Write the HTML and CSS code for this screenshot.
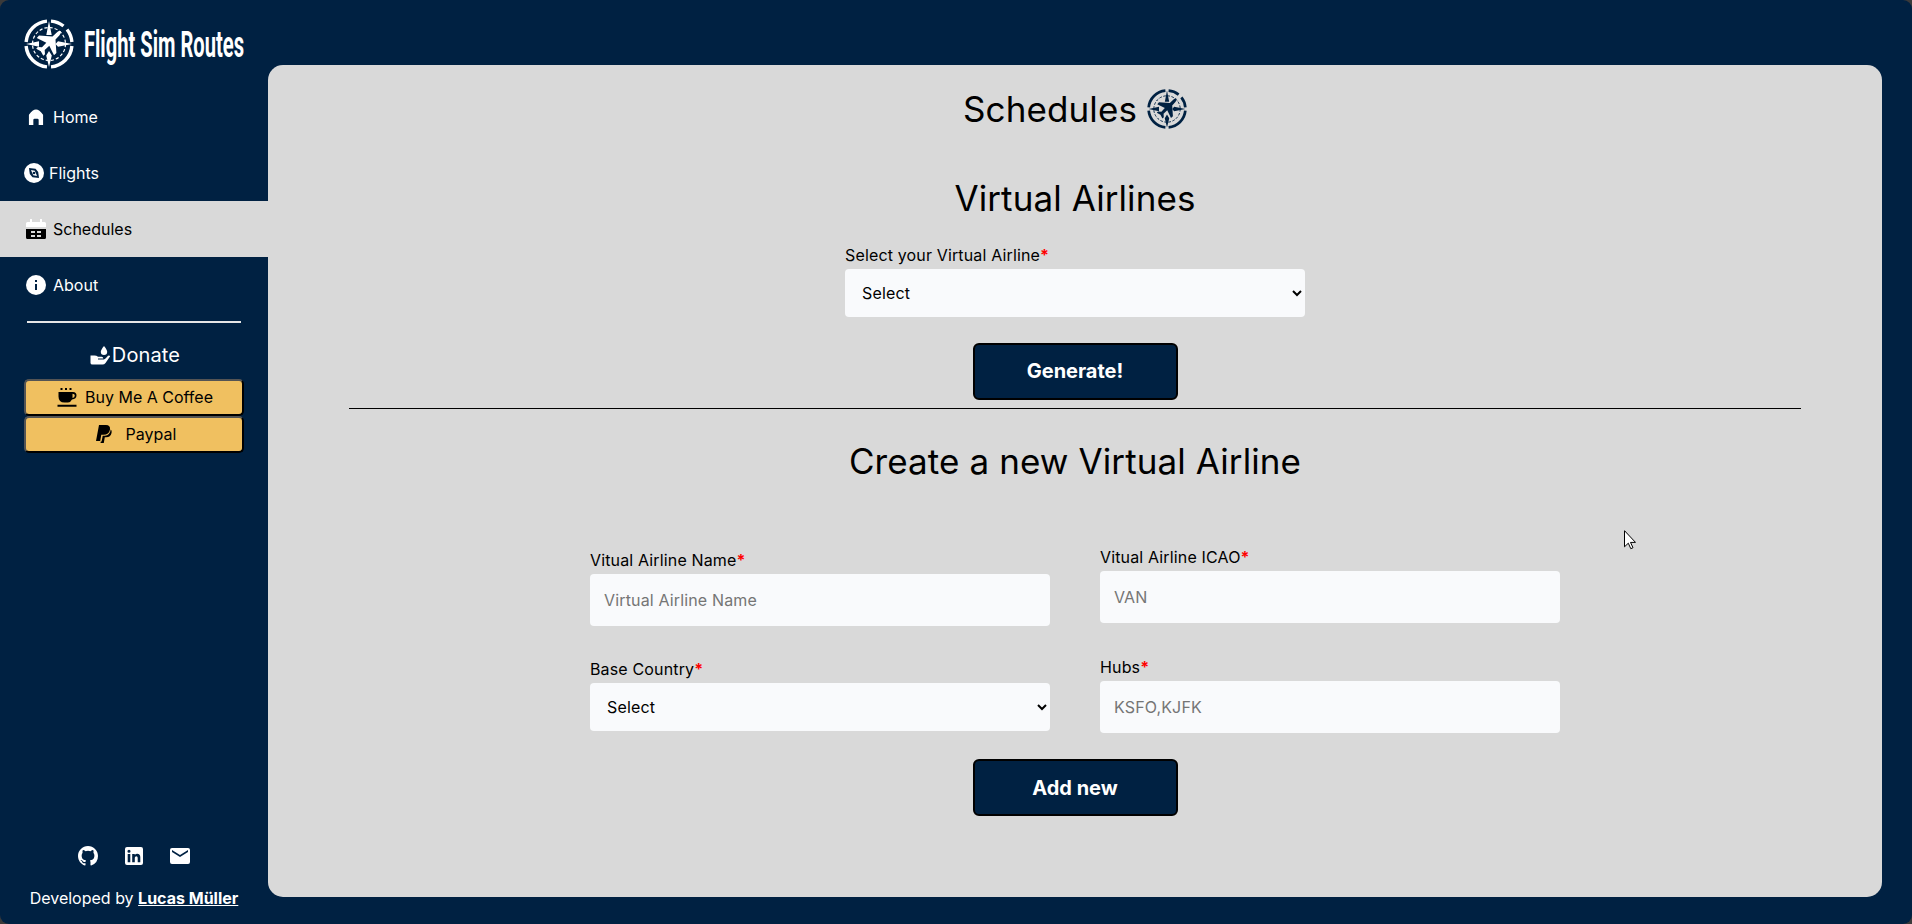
FILE: index.html
```html
<!DOCTYPE html>
<html lang="en">
<head>
<meta charset="utf-8">
<title>Flight Sim Routes</title>
<link rel="stylesheet" href="styles.css">
</head>
<body>
<svg class="defs" aria-hidden="true">
  <symbol id="logo" viewBox="0 0 50 50">
    <g fill="none" stroke="currentColor">
      <path stroke-width="3.400" d="M23 2.100A23 23 0 0 0 2.100 23M2.100 27A23 23 0 0 0 23 47.900M27 47.900A23 23 0 0 0 47.900 27M27 2.100A23 23 0 0 1 39.500 7M43 10.500A23 23 0 0 1 47.900 23"/>
      <circle cx="25" cy="25" r="16.500" stroke-width="1.200" stroke-dasharray="3.200 1.983"/>
    </g>
    <g fill="currentColor">
      <path d="M25 2l2.700 14h-5.400zM25 48l-2.800-11.500 2.800-4.500 2.800 4.500zM2 25l13-2.800v5.600zM48 25l-14 2.800-2.500-2.800 2.500-2.800z"/>
      <path d="M36.800 12.200q-2-.7-4 1.300L28.500 17.500l-13.500-.9-2.200 2.400 9.500 4.700-4.300 4.600-4.200-.3-1.600 1.700 4.600 2.500 2.500 4.600 1.700-1.600-.3-4.200 4.600-4.300 4.700 9.500 2.400-2.200-.9-13.500 4-4.300q2-2 1.300-4z"/>
    </g>
  </symbol>
</svg>
<div class="app">
  <aside class="sidebar">
    <div class="brand">
      <svg class="brand-logo"><use href="#logo"/></svg>
      <svg class="brand-name" width="172" height="48"><text x="0" y="33" textLength="160" lengthAdjust="spacingAndGlyphs">Flight Sim Routes</text></svg>
    </div>
    <nav class="nav">
      <a class="nav-item"><svg class="icon" viewBox="0 0 24 24"><path d="M3.500 21.500V9.200Q8 3 12 3t8.500 6.200v12.300h-5.300v-6q0-1.500-1.500-1.500h-3.400q-1.500 0-1.500 1.500v6z"/></svg>Home</a>
      <a class="nav-item nav-flights"><svg class="icon" viewBox="0 0 20 20"><circle cx="10" cy="10" r="10"/><path class="cut" d="M5 5l6.500.8L14.200 9l.8 6-6.500-.8L5.800 11z"/><path d="M7 7l3.800.8L13 13l-3.800-.8z"/><circle class="cut" cx="10" cy="10" r="1.300"/></svg>Flights</a>
      <a class="nav-item active"><svg class="icon" viewBox="0 0 20 20"><path class="top" d="M0 8V4.500Q0 3 1.500 3H4V0h2v3h8V0h2v3h2.500Q20 3 20 4.500V8z"/><path class="bottom" fill-rule="evenodd" d="M0 10h20v8.500q0 1.500-1.500 1.500h-17Q0 20 0 18.500zM5 12v2h4v-2zm6 0v2h4v-2zm-6 4v2h4v-2zm6 0v2h4v-2z"/></svg>Schedules</a>
      <a class="nav-item"><svg class="icon" viewBox="0 0 20 20"><circle cx="10" cy="10" r="10"/><path class="cut" d="M9 5h2v2H9zM9 9h2v6H9z"/></svg>About</a>
    </nav>
    <hr class="side-rule">
    <div class="donate"><svg class="icon" viewBox="0 0 20 20"><path d="M14 1q3.200 4 3.200 5.700a3.200 3.200 0 0 1-6.400 0Q10.800 5 14 1zM.5 10.500h4q2 0 3.500 1.300h3.500q1.800.2 1.800 1.700H8v1h5.700q1.300-.2 2.300-1.600l2-2.100q1.500-1 2.200.5l-4.700 6.600q-1.200 1.600-3 1.600H2.500Q.5 19.500.5 18z"/></svg>Donate</div>
    <div class="donate-links">
      <button class="gold"><svg class="icon" viewBox="0 0 20 20"><path d="M3.500 1h2v2h-2zM8 1h2v2H8zm4.500 0h2v2h-2zM1.500 5H16q3.500.2 3.500 3.300 0 3.700-4.500 4.200-1.500 3-4 3H7.500q-6 0-6-6zm14 1.800v4.200q2.300-.5 2.300-2.500 0-1.700-2.300-1.700zM.5 17.800h19v2H.5z" fill-rule="evenodd"/></svg>Buy Me A Coffee</button>
      <button class="gold paypal"><svg class="icon" viewBox="0 0 20 20"><path d="M5 1h7q4.500.2 4 4.500-1 5.300-6.500 5.300H7.300L6.200 17H2z"/><path d="M16.700 5.500q1.400 1 .9 3.200-.9 4.500-5.600 4.500h-1.200l-1 5.800H6.500l.3-1.500h.8l1.100-5.700h2.100q5.200-.2 5.900-6.300z"/></svg>Paypal</button>
    </div>
    <footer class="side-foot">
      <div class="social">
        <svg width="20" height="20" viewBox="0 0 16 16"><path d="M8 0C3.580 0 0 3.580 0 8c0 3.540 2.290 6.530 5.470 7.590.4.070.55-.17.55-.38 0-.19-.01-.82-.01-1.490-2.010.37-2.530-.49-2.690-.94-.09-.23-.48-.94-.82-1.130-.28-.15-.68-.52-.01-.53.63-.01 1.080.58 1.230.82.720 1.210 1.870.87 2.330.66.070-.52.280-.87.510-1.070-1.780-.2-3.640-.89-3.640-3.950 0-.87.310-1.590.82-2.150-.08-.2-.36-1.020.08-2.120 0 0 .67-.21 2.200.82a7.600 7.600 0 0 1 4 0c1.530-1.040 2.200-.82 2.200-.82.44 1.100.16 1.920.08 2.120.51.56.82 1.270.82 2.150 0 3.070-1.870 3.750-3.650 3.950.29.25.54.73.54 1.480 0 1.070-.01 1.930-.01 2.200 0 .21.15.46.55.38A8.010 8.010 0 0 0 16 8c0-4.420-3.580-8-8-8z"/></svg>
        <svg width="18" height="18" viewBox="0 0 18 18"><path fill-rule="evenodd" d="M2 0h14q2 0 2 2v14q0 2-2 2H2q-2 0-2-2V2q0-2 2-2zm.7 7v8.300h2.600V7zM4 2.700a1.500 1.500 0 1 0 0 3.100 1.500 1.500 0 0 0 0-3.100zM7.200 7v8.300h2.600v-4.500q.2-1.500 1.500-1.500t1.400 1.500v4.500h2.600v-5q0-3.500-3-3.500-1.700 0-2.500 1.300V7z"/></svg>
        <svg width="20" height="16" viewBox="0 0 20 16"><path fill-rule="evenodd" d="M2 0h16q2 0 2 2v12q0 2-2 2H2q-2 0-2-2V2q0-2 2-2zm0 2v2l8 5 8-5V2l-8 5z"/></svg>
      </div>
      <p class="credit">Developed by <a>Lucas Müller</a></p>
    </footer>
  </aside>
  <main class="panel">
    <h1 class="title">Schedules <svg class="title-logo"><use href="#logo"/></svg></h1>
    <section class="pick">
      <h2 class="title">Virtual Airlines</h2>
      <label class="field"><span>Select your Virtual Airline<b>*</b></span><select><option>Select</option></select></label>
      <button class="primary generate">Generate!</button>
    </section>
    <hr class="rule">
    <section class="create">
      <h2 class="title">Create a new Virtual Airline</h2>
      <div class="grid">
        <div class="col col-left">
          <label class="field"><span>Vitual Airline Name<b>*</b></span><input placeholder="Virtual Airline Name"></label>
          <label class="field"><span>Base Country<b>*</b></span><select><option>Select</option></select></label>
        </div>
        <div class="col">
          <label class="field"><span>Vitual Airline ICAO<b>*</b></span><input placeholder="VAN"></label>
          <label class="field"><span>Hubs<b>*</b></span><input placeholder="KSFO,KJFK"></label>
        </div>
      </div>
      <button class="primary">Add new</button>
    </section>
  </main>
  <svg class="cursor" viewBox="0 0 12 20"><path d="M.5.700v16.100l3.800-3.600 2.500 5.500 2.200-1-2.500-5.300h5z"/></svg>
</div>
</body>
</html>
```

FILE: styles.css
```css
* { box-sizing: border-box; }
body { margin: 0; background: #3a3a3a; font: 16px/24px Inter, "Liberation Sans", sans-serif; color: #000; }
.defs { position: absolute; width: 0; height: 0; }
.app { display: flex; width: 1912px; height: 924px; background: #002142; border-radius: 9px; overflow: hidden; }
.sidebar { width: 268px; display: flex; flex-direction: column; color: #fff; }
.brand { display: flex; height: 89px; padding: 19px 0 0 24px; }
.brand-logo { width: 50px; height: 50px; margin-right: 10px; flex: none; }
.brand-name { font: 700 36px Roboto, sans-serif; fill: #fff; margin-top: 5px; flex: none; overflow: visible; }
.icon { width: 20px; height: 20px; fill: currentColor; flex: none; }
.cut { fill: #002142; }
.nav-item { display: flex; align-items: center; height: 56px; padding-left: 26px; gap: 7px; }
.nav-flights { padding-left: 24px; gap: 5px; }
.active { background: #d9d9d9; color: #000; }
.top { fill: #fff; }
.bottom { fill: #000; }
.side-rule { width: 214px; height: 2px; margin: 8px 0 0 27px; border: 0; background: #e6e6e6; }
.donate { display: flex; justify-content: center; align-items: center; gap: 2px; height: 24px; margin-top: 20px; font-size: 20px; letter-spacing: .15px; padding-left: 2px; }
.donate-links { display: flex; flex-direction: column; padding: 12px 24px 0; }
.gold { display: flex; align-items: center; justify-content: center; gap: 8px; width: 220px; height: 37px; padding: 0 0 2px 2px; border: 2px outset #000; border-radius: 5px; background: #f0c060; font: 16px Inter, sans-serif; color: #000; }
.paypal { gap: 12px; }
.side-foot { margin-top: auto; height: 78px; }
.social { display: flex; justify-content: center; align-items: center; gap: 27px; height: 20px; fill: #fff; }
.credit { margin: 20px 0 0; text-align: center; }
.credit a { font-weight: 700; text-decoration: underline; }
.panel { width: 1614px; height: 832px; margin-top: 65px; padding-top: 19px; border-radius: 15px; background: #d9d9d9; letter-spacing: .15px; }
.title { display: flex; justify-content: center; align-items: center; gap: 10px; margin: 0; height: 50px; font-size: 35px; line-height: 50px; font-weight: 400; letter-spacing: .1px; }
.title-logo { width: 40px; height: 40px; color: #002142; }
.pick, .create { display: flex; flex-direction: column; align-items: center; }
.pick { padding-top: 39px; }
.field { display: flex; flex-direction: column; width: 460px; }
.field b { color: #f00; }
.field select, .field input { width: 460px; border: 0; border-radius: 4px; background: #f9fafc; font: 16px Inter, sans-serif; letter-spacing: .15px; color: #000; margin: 2px 0 0; }
.field select { height: 48px; padding: 0 13px; }
.field input { height: 52px; padding: 0 14px; }
.field input::placeholder { color: #757575; }
.pick .field { margin-top: 20px; }
.primary { width: 205px; height: 57px; margin-top: 26px; border: 2px solid #000; border-radius: 6px; background: #002142; color: #fff; font: 700 20px Inter, sans-serif; }
.generate { padding-bottom: 3px; }
.rule { width: 1452px; height: 1px; margin: 8px auto 0; border: 0; background: #000; }
.create { padding-top: 27px; }
.grid { display: grid; grid-template-columns: 460px 460px; column-gap: 50px; margin-top: 59px; }
.col { display: flex; flex-direction: column; gap: 32px; }
.col-left { padding-top: 3px; gap: 31px; }
.cursor { position: absolute; left: 1624px; top: 530px; width: 12px; height: 20px; fill: #fff; stroke: #000; }
```
